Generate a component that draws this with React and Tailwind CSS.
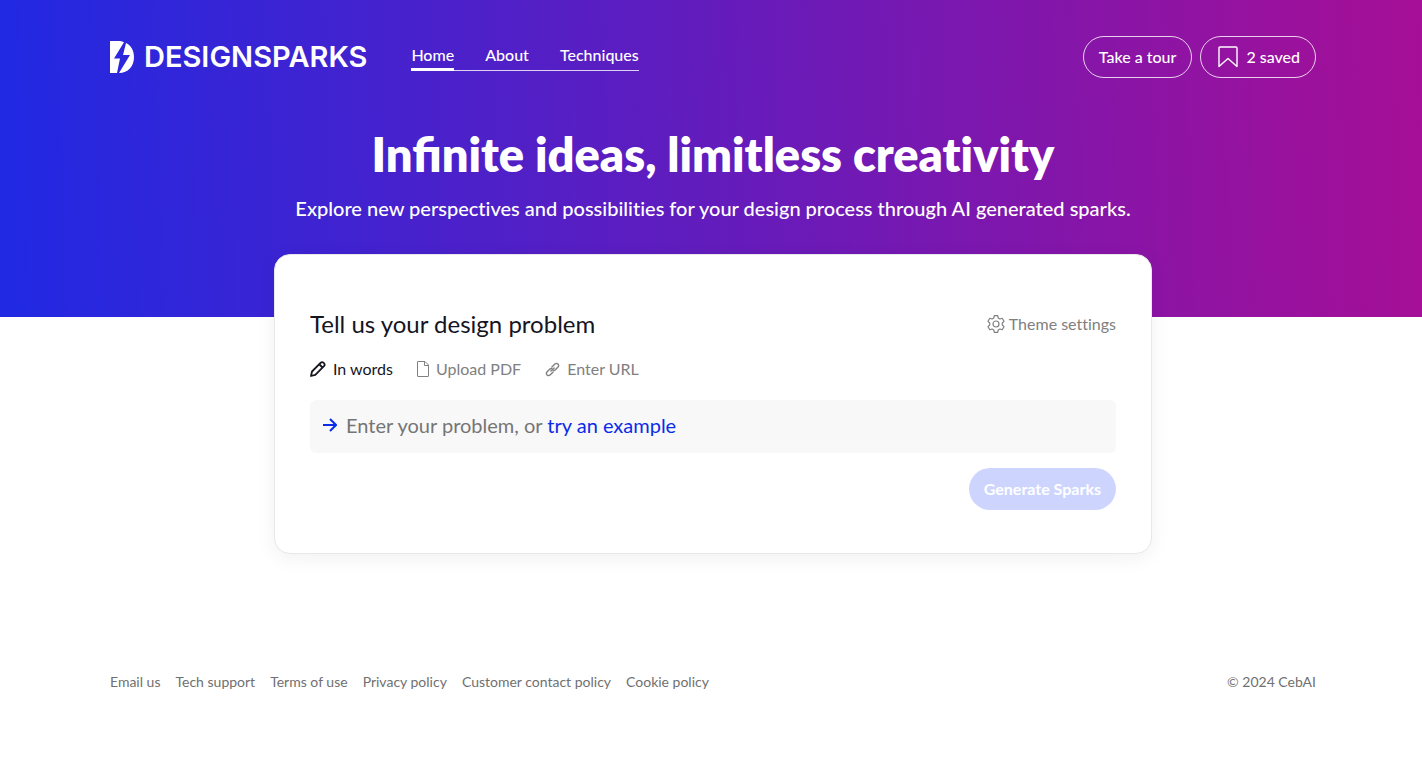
import React, { useState } from 'react';

const navLinks = ['Home', 'About', 'Techniques'];

const footerLinks = [
  'Email us',
  'Tech support',
  'Terms of use',
  'Privacy policy',
  'Customer contact policy',
  'Cookie policy',
];

const EXAMPLE = 'How might we make city parks more welcoming at night?';

function LogoMark() {
  return (
    <svg width="24" height="32" viewBox="0 0 24 32" fill="currentColor" aria-hidden="true">
      <path d="M0 0H8C10.500 0 12.500 .4 14 1.200L4 17.500H10L7 32H0Z" />
      <path d="M16 2C21 4.500 24 9.500 24 16C24 25.500 18 32 9 32L20 14H13Z" />
    </svg>
  );
}

function BookmarkIcon() {
  return (
    <svg width="20" height="22" viewBox="0 0 20 22" fill="none" stroke="currentColor" strokeWidth="1.400" strokeLinejoin="round" aria-hidden="true">
      <path d="M2 1H18Q19 1 19 2V20.500L10 12.500L1 20.500V2Q1 1 2 1Z" />
    </svg>
  );
}

function GearIcon() {
  return (
    <svg width="18" height="18" viewBox="0 0 18 18" fill="none" stroke="currentColor" strokeWidth="1.200" strokeLinejoin="round" aria-hidden="true">
      <path d="M7.300 .7H10.700L11.200 3L12.900 4L15.200 3.300L17 6.300L15.300 8V10L17 11.700L15.200 14.700L12.900 14L11.200 15L10.700 17.300H7.300L6.800 15L5.100 14L2.800 14.700L1 11.700L2.700 10V8L1 6.300L2.800 3.300L5.100 4L6.800 3Z" />
      <circle cx="9" cy="9" r="3" />
    </svg>
  );
}

function PencilIcon() {
  return (
    <svg width="16" height="16" viewBox="0 0 16 16" fill="none" stroke="currentColor" strokeWidth="1.800" strokeLinejoin="round" aria-hidden="true">
      <path d="M1 15L2 10.500L10.800 1.700Q12.200 .5 13.700 1.900Q15.300 3.400 14.200 4.900L5.300 13.800Z" />
      <path d="M9.500 3.500L12.500 6.500" />
    </svg>
  );
}

function FileIcon() {
  return (
    <svg width="12" height="16" viewBox="0 0 12 16" fill="none" stroke="currentColor" strokeWidth="1" strokeLinejoin="round" aria-hidden="true">
      <path d="M.5 1Q.5 .5 1 .5H8L11.500 4V15Q11.500 15.500 11 15.500H1Q.5 15.500 .5 15Z" />
      <path d="M7.500 .5V4.500H11.500" />
    </svg>
  );
}

function LinkIcon() {
  return (
    <svg width="15" height="15" viewBox="0 0 24 24" fill="none" stroke="currentColor" strokeWidth="2.200" strokeLinecap="round" aria-hidden="true">
      <path d="M9.500 14.500L14.500 9.500" />
      <path d="M11 8L15.500 3.500Q18 1 20.700 3.300Q23 6 20.500 8.500L16.500 12.500Q15 14 13 13.500" />
      <path d="M13 16L8.500 20.500Q6 23 3.300 20.700Q1 18 3.500 15.500L7.500 11.500Q9 10 11 10.500" />
    </svg>
  );
}

function ArrowIcon() {
  return (
    <svg width="14" height="14" viewBox="0 0 14 14" fill="none" stroke="currentColor" strokeWidth="2" aria-hidden="true">
      <path d="M0 7H12.500M7 1L13 7L7 13" />
    </svg>
  );
}

const modes = [
  { id: 'words', label: 'In words', Icon: PencilIcon },
  { id: 'pdf', label: 'Upload PDF', Icon: FileIcon },
  { id: 'url', label: 'Enter URL', Icon: LinkIcon },
];

/**
 * Logo, navigation and the two actions on the right
 */
function TopBar() {
  return (
    <div className="flex items-start justify-between pt-9">
      <div className="flex items-start">
        <a href="#home" className="flex items-center gap-[10px] pt-[3px]">
          <LogoMark />
          <span className="font-['Inter',sans-serif] text-[29px] leading-9 font-semibold">DESIGNSPARKS</span>
        </a>
        <nav className="ml-11 flex gap-[31px] border-b border-white/80 pt-[7px] font-medium">
          {navLinks.map((link, i) => (
            <a
              key={link}
              href={`#${link.toLowerCase()}`}
              className={i === 0 ? '-mb-px border-b-3 border-white pb-px leading-6' : 'pb-px leading-6'}
            >
              {link}
            </a>
          ))}
        </nav>
      </div>
      <div className="flex gap-2 font-medium">
        <button className="h-[42px] rounded-full border border-white/80 px-[15px]">Take a tour</button>
        <button className="flex h-[42px] items-center gap-2 rounded-full border border-white/80 pr-[15px] pl-[17px]">
          <BookmarkIcon />
          2 saved
        </button>
      </div>
    </div>
  );
}

/**
 * Form where the design problem is entered
 */
function ProblemCard() {
  const [mode, setMode] = useState('words');
  const [problem, setProblem] = useState('');

  return (
    <form
      className="mx-auto -mt-[63px] w-full max-w-[878px] rounded-2xl border border-[#e8e8e8] bg-white px-[35px] pt-[49px] pb-[43px] shadow-[0_4px_20px_rgba(0,0,0,0.06)]"
      onSubmit={e => e.preventDefault()}
    >
      <div className="flex items-center justify-between">
        <h2 className="text-2xl leading-10 text-[#15151f]">Tell us your design problem</h2>
        <button type="button" className="flex items-center gap-1 text-[#808080] [font-variant-ligatures:none]">
          <GearIcon />
          Theme settings
        </button>
      </div>

      <div className="mt-[13px] flex gap-6">
        {modes.map(({ id, label, Icon }) => (
          <button
            key={id}
            type="button"
            onClick={() => setMode(id)}
            className={`flex items-center gap-[7px] leading-6 ${mode === id ? 'text-[#15151f]' : 'text-[#808080]'}`}
          >
            <Icon />
            {label}
          </button>
        ))}
      </div>

      <div className="relative mt-[19px] flex h-[53px] items-center rounded-md bg-[#f8f8f8] text-xl">
        <input
          aria-label="Design problem"
          value={problem}
          onChange={e => setProblem(e.target.value)}
          className="h-full w-full rounded-md bg-transparent pr-3 pl-9 outline-none"
        />
        <div className="pointer-events-none absolute inset-0 flex items-center gap-[9px] px-[13px] pb-1">
          <span className="text-[#0a2be8]"><ArrowIcon /></span>
          {!problem && (
            <span className="text-[#757575]">
              Enter your problem, or{' '}
              <button
                type="button"
                onClick={() => setProblem(EXAMPLE)}
                className="pointer-events-auto text-[#0a2be8]"
              >
                try an example
              </button>
            </span>
          )}
        </div>
      </div>

      <div className="mt-[15px] flex justify-end">
        <button disabled={!problem} className="h-[42px] rounded-full bg-[#0a2be8] px-[15px] font-bold text-white disabled:bg-[#cdd5ff]">
          Generate Sparks
        </button>
      </div>
    </form>
  );
}

function Footer() {
  return (
    <footer className="mt-[118px] flex justify-between text-sm leading-5 text-[#707070]">
      <div className="flex gap-[15px]">
        {footerLinks.map(link => (
          <a key={link} href="#footer">{link}</a>
        ))}
      </div>
      <p>© 2024 CebAI</p>
    </footer>
  );
}

export default function App() {
  return (
    <div className="min-h-screen bg-white pb-16 font-['Lato',sans-serif] text-base">
      <header className="h-[317px] bg-linear-[88deg,#2029e3,#a60f96] pr-[106px] pl-[110px] text-white">
        <TopBar />
        <div className="mt-[46px] text-center">
          <h1 className="text-[47px] leading-[60px] font-extrabold">
            {/* keeps the fi ligature, drops the ti one */}
            Infinite ideas, <span className="[font-variant-ligatures:none]">limitless creativity</span>
          </h1>
          <p className="mt-[10px] text-xl leading-7 font-medium [font-variant-ligatures:none]">
            Explore new perspectives and possibilities for your design process through AI generated sparks.
          </p>
        </div>
      </header>
      <main className="pr-[106px] pl-[110px]">
        <ProblemCard />
        <Footer />
      </main>
    </div>
  );
}
